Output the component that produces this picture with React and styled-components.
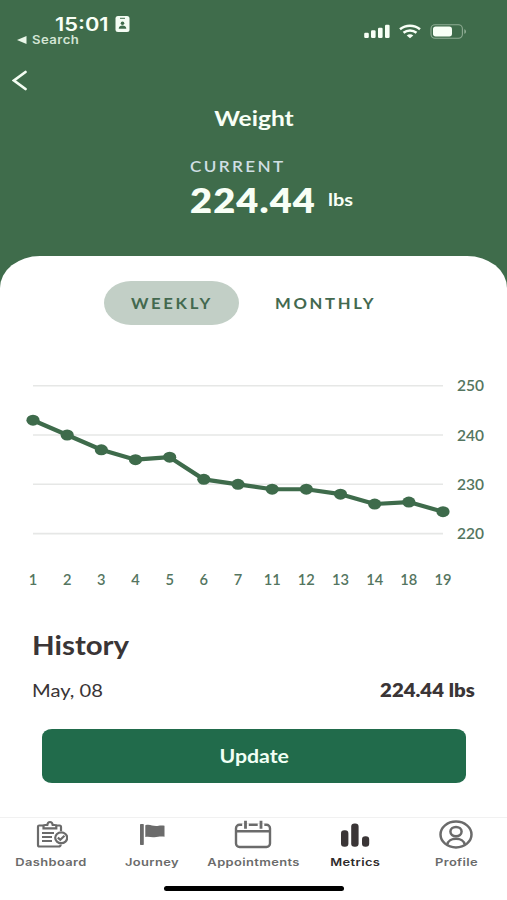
import React from 'react';
import styled, { createGlobalStyle } from 'styled-components';

const weights = [
  { day: '1', value: 243 },
  { day: '2', value: 240 },
  { day: '3', value: 237 },
  { day: '4', value: 235 },
  { day: '5', value: 235.5 },
  { day: '6', value: 231 },
  { day: '7', value: 230 },
  { day: '11', value: 229 },
  { day: '12', value: 229 },
  { day: '13', value: 228 },
  { day: '14', value: 226 },
  { day: '18', value: 226.4 },
  { day: '19', value: 224.44 },
];

const ticks = [250, 240, 230, 220];

const StatusBar = () => (
  <Status>
    <Clock>
      <Time>
        <TimeText>15:01</TimeText>
        <svg width="15" height="16" viewBox="0 0 15 16">
          <rect x="0.5" y="0" width="14" height="16" rx="2.5" fill="#f4fcf3" />
          <path d="M5 2.3h5" stroke="#3f6c4b" strokeWidth="1" />
          <circle cx="7.5" cy="7.3" r="1.8" fill="#3f6c4b" />
          <path d="M3.7 12.8c0-4.4 7.6-4.4 7.6 0z" fill="#3f6c4b" />
        </svg>
      </Time>
      <BackToApp>
        <svg width="10" height="8" viewBox="0 0 10 8">
          <path d="M0 4L9.5 0v8z" fill="#eaf7e9" />
        </svg>
        <SearchText>Search</SearchText>
      </BackToApp>
    </Clock>
    <svg width="104" height="16" viewBox="0 0 104 16">
      <g fill="#f8fff6">
        <rect x="0.2" y="8.7" width="4.6" height="5.2" rx="1.2" />
        <rect x="7" y="6.3" width="4.6" height="7.6" rx="1.2" />
        <rect x="14" y="3.7" width="4.6" height="10.2" rx="1.2" />
        <rect x="21" y="0.8" width="4.6" height="13.1" rx="1.2" />
        <path d="M46 14.2l-3.3-2.8c1.9-1.6 4.700-1.600 6.600 0z" />
      </g>
      <g fill="none" stroke="#f8fff6" strokeWidth="2.5">
        <path d="M36 5.200c5.700-4.700 14.300-4.700 20 0" />
        <path d="M39.500 8.700c3.800-3.100 9.200-3.100 13 0" />
      </g>
      <rect x="67" y="0.700" width="31.400" height="13.600" rx="4" fill="none" stroke="#8fac94" strokeWidth="1.100" />
      <rect x="69" y="2.600" width="19" height="9.800" rx="2.700" fill="#f8fff6" />
      <path d="M100.300 5.200c2.300.6 2.300 4 0 4.600z" fill="#8fac94" />
    </svg>
  </Status>
);

// Plot area: 33..443 horizontally, 10 lbs every 49.3px
const WeightChart = () => {
  const x = i => 33 + i * (410 / (weights.length - 1));
  const y = v => 15.7 + (250 - v) * 4.93;

  return (
    <Chart width="507" height="230" viewBox="0 0 507 230">
      {ticks.map(t => (
        <g key={t}>
          <line x1="33" x2="443" y1={y(t)} y2={y(t)} stroke="#e6e7e6" strokeWidth="1.6" />
          <AxisLabel x="457" y={y(t) + 5.6} textLength="27" lengthAdjust="spacingAndGlyphs">{t}</AxisLabel>
        </g>
      ))}
      <polyline
        points={weights.map((w, i) => `${x(i)},${y(w.value)}`).join(' ')}
        fill="none"
        stroke="#3e6b4b"
        strokeWidth="4.2"
        strokeLinejoin="round"
      />
      {weights.map((w, i) => (
        <g key={w.day}>
          <ellipse cx={x(i)} cy={y(w.value)} rx="6.6" ry="5.5" fill="#3e6b4b" />
          <AxisLabel
            x={x(i)}
            y="215.4"
            textAnchor="middle"
            textLength={w.day.length > 1 ? 17 : 8.5}
            lengthAdjust="spacingAndGlyphs"
          >
            {w.day}
          </AxisLabel>
        </g>
      ))}
    </Chart>
  );
};

const DashboardIcon = () => (
  <svg width="34" height="30" viewBox="0 0 34 30" fill="none" stroke="#6b6b6b" strokeWidth="2.2">
    <path d="M9.500 5.500H5.200Q4 5.500 4 6.700V25Q4 26.500 5.500 26.500H24.500Q26.700 26.500 26.700 24.500M22 5.500h3.700q1.300 0 1.300 1.500V11" />
    <path d="M9.500 8.300V6.200Q9.500 5 11 5h2.300q.4-3 2.700-3t2.700 3H21q1.300 0 1.300 1.200v2.100z" />
    <path d="M8 13h12M8 17h10M8 21h10" strokeWidth="1.900" />
    <ellipse cx="27.200" cy="17.800" rx="6" ry="5.400" fill="#fff" />
    <path d="M23.800 17.700l2.500 2 4.200-3.900" />
  </svg>
);

const JourneyIcon = () => (
  <svg width="34" height="30" viewBox="0 0 34 30" fill="#6b6b6b">
    <rect x="5" y="4" width="3.800" height="21" rx="0.700" />
    <path d="M10.300 5.200c5-1.500 7 1.300 12 .8 3-.3 4.500-.6 7.200-.2v11c-5-.8-7 .8-11.500.4-3-.3-5-.8-7.700-.2z" />
  </svg>
);

const AppointmentsIcon = () => (
  <svg width="38" height="30" viewBox="0 0 38 30" fill="none" stroke="#6b6b6b" strokeWidth="2.400">
    <rect x="2" y="4.800" width="34" height="22.200" rx="3.500" />
    <path d="M2 11.200h34" />
    <path d="M8.200 4.800h6.600M23.700 4.800h6.600" stroke="#fff" strokeWidth="3.200" />
    <path d="M11.500 0.800v8M27 0.800v8" strokeWidth="2.800" />
  </svg>
);

const MetricsIcon = () => (
  <svg width="34" height="30" viewBox="0 0 34 30" fill="#3a3536">
    <rect x="3" y="10.200" width="7.400" height="16.600" rx="3.300" />
    <rect x="13.200" y="3.500" width="7.400" height="23.300" rx="3.300" />
    <rect x="24" y="16.200" width="7.200" height="10.600" rx="3.300" />
  </svg>
);

const ProfileIcon = () => (
  <svg width="36" height="30" viewBox="0 0 36 30" fill="none" stroke="#6b6b6b" strokeWidth="2.500">
    <ellipse cx="18" cy="14.500" rx="15.500" ry="12.900" />
    <ellipse cx="18" cy="11.600" rx="5.600" ry="4.700" />
    <path d="M9.300 24.700c.8-8 16.600-8 17.400 0" />
  </svg>
);

const tabs = [
  { label: 'Dashboard', Icon: DashboardIcon, stretch: 1.23 },
  { label: 'Journey', Icon: JourneyIcon, stretch: 1.23 },
  { label: 'Appointments', Icon: AppointmentsIcon, stretch: 1.23 },
  { label: 'Metrics', Icon: MetricsIcon, stretch: 1.23, active: true },
  { label: 'Profile', Icon: ProfileIcon, stretch: 1.23 },
];

const App = () => (
  <Screen>
    <GlobalStyle />
    <Header>
      <StatusBar />
      <BackButton aria-label="Back">
        <svg width="16" height="22" viewBox="0 0 16 22">
          <path d="M13.500 2L2 10.500l11.500 8.500" fill="none" stroke="#f4fdf3" strokeWidth="2.700" strokeLinecap="round" />
        </svg>
      </BackButton>
      <Title>Weight</Title>
      <Current>
        <CurrentLabel>CURRENT</CurrentLabel>
        <Reading>
          <Value>224.44</Value>
          <Unit>lbs</Unit>
        </Reading>
      </Current>
    </Header>
    <Panel>
      <Periods>
        <Period $active>
          <PeriodText>WEEKLY</PeriodText>
        </Period>
        <Period>
          <PeriodText>MONTHLY</PeriodText>
        </Period>
      </Periods>
      <WeightChart />
      <History>
        <HistoryTitle>History</HistoryTitle>
        <HistoryRow>
          <EntryDate>May, 08</EntryDate>
          <EntryValue>224.44 lbs</EntryValue>
        </HistoryRow>
      </History>
      <UpdateButton>
        <UpdateText>Update</UpdateText>
      </UpdateButton>
    </Panel>
    <TabBar>
      {tabs.map(({ label, Icon, stretch, active }) => (
        <Tab key={label}>
          <Icon />
          <TabLabel $stretch={stretch} $active={active}>{label}</TabLabel>
        </Tab>
      ))}
    </TabBar>
    <HomeArea>
      <HomeIndicator />
    </HomeArea>
  </Screen>
);

// Styled Components
const GlobalStyle = createGlobalStyle`
  body {
    margin: 0;
    background: #fff;
  }
  * {
    box-sizing: border-box;
  }
  svg {
    display: block;
    flex-shrink: 0;
  }
`;

const Screen = styled.div`
  display: flex;
  flex-direction: column;
  width: 507px;
  height: 900px;
  overflow: hidden;
  background: #3f6c4b;
  font-family: Lato, 'Liberation Sans', sans-serif;
`;

const Stretched = styled.span`
  display: inline-block;
  white-space: nowrap;
  transform: scaleX(${({ $stretch }) => $stretch || 1.2});
  transform-origin: ${({ $origin }) => $origin || 'left'} center;
`;

const Header = styled.header`
  display: flex;
  flex-direction: column;
  height: 256px;
  color: #f8fff6;
`;

const Status = styled.div`
  display: flex;
  justify-content: space-between;
  align-items: flex-start;
  height: 68px;
  padding: 14px 39px 0 17px;

  > svg {
    margin-top: 10px;
  }
`;

const Clock = styled.div`
  font-family: 'Liberation Sans', sans-serif;
`;

const Time = styled.div`
  display: flex;
  align-items: center;
  height: 20px;
  padding-left: 38px;
`;

const TimeText = styled(Stretched).attrs({ $stretch: 1.18 })`
  width: 60px;
  font-family: Inter, 'Liberation Sans', sans-serif;
  font-size: 18.5px;
  font-weight: 600;
  line-height: 20px;
`;

const BackToApp = styled.div`
  display: flex;
  align-items: center;
  gap: 5px;
  height: 12px;
`;

const SearchText = styled(Stretched).attrs({ $stretch: 1.14 })`
  font-family: Inter, 'Liberation Sans', sans-serif;
  font-size: 11.5px;
  font-weight: 600;
  line-height: 12px;
  letter-spacing: 0.4px;
  color: #d3e5d4;
`;

const BackButton = styled.button`
  width: 40px;
  height: 26px;
  padding: 2px 0 2px 12px;
  border: none;
  background: none;
  cursor: pointer;
`;

const Title = styled.h1`
  align-self: center;
  margin: 11px 0 0;
  font-size: 21px;
  font-weight: 700;
  line-height: 26px;
  transform: scaleX(1.17);
`;

const Current = styled.div`
  display: flex;
  flex-direction: column;
  align-items: flex-start;
  padding: 26px 0 0 190px;
`;

const CurrentLabel = styled(Stretched).attrs({ $stretch: 1.14 })`
  font-size: 15px;
  font-weight: 600;
  line-height: 18px;
  letter-spacing: 2.1px;
  color: #d0dfe4;
`;

const Reading = styled.div`
  display: flex;
  align-items: center;
  height: 49px;
`;

const Value = styled(Stretched).attrs({ $stretch: 1.15 })`
  width: 138px;
  font-size: 33px;
  font-weight: 800;
  line-height: 40px;
  letter-spacing: 1px;
`;

const Unit = styled(Stretched).attrs({ $stretch: 1.14 })`
  font-size: 17.5px;
  font-weight: 700;
`;

const Panel = styled.main`
  display: flex;
  flex-direction: column;
  height: 561px;
  padding-top: 25px;
  background: #fff;
  border-radius: 40px 40px 0 0 / 32px 32px 0 0;
`;

const Periods = styled.div`
  display: flex;
  gap: 19px;
  padding-left: 104px;
`;

const Period = styled.button`
  display: flex;
  justify-content: center;
  align-items: center;
  width: 135px;
  height: 44px;
  padding: 0;
  border: none;
  border-radius: 27px / 22px;
  background: ${({ $active }) => ($active ? '#c2cfc6' : 'transparent')};
  color: #43694f;
  font-family: inherit;
  cursor: pointer;
`;

const PeriodText = styled(Stretched).attrs({ $stretch: 1.11, $origin: 'center' })`
  font-size: 15px;
  font-weight: 700;
  letter-spacing: 2.4px;
`;

const Chart = styled.svg`
  margin-top: 45px;
`;

const AxisLabel = styled.text`
  font-family: Lato, 'Liberation Sans', sans-serif;
  font-size: 15.5px;
  font-weight: 600;
  fill: #547560;
`;

const History = styled.section`
  padding: 28px 32px 0;
  color: #3a3536;
`;

const HistoryTitle = styled(Stretched).attrs({ as: 'h2', $stretch: 1.09 })`
  margin: 0;
  font-size: 27px;
  font-weight: 700;
  line-height: 34px;
`;

const HistoryRow = styled.div`
  display: flex;
  justify-content: space-between;
  align-items: center;
  height: 24px;
  margin-top: 16px;
  font-size: 18px;
`;

const EntryDate = styled(Stretched).attrs({ $stretch: 1.12 })``;

const EntryValue = styled(Stretched).attrs({ $stretch: 1.13, $origin: 'right' })`
  font-weight: 800;
`;

const UpdateButton = styled.button`
  height: 54px;
  margin: 27px 41px 0 42px;
  border: none;
  border-radius: 10px / 8px;
  background: #216b4b;
  color: #f0fff4;
  font-family: inherit;
  cursor: pointer;
`;

const UpdateText = styled(Stretched).attrs({ $stretch: 1.15, $origin: 'center' })`
  font-size: 18.5px;
  font-weight: 700;
`;

const TabBar = styled.nav`
  display: grid;
  grid-template-columns: repeat(5, 1fr);
  height: 59px;
  border-top: 1px solid #f1f1f1;
  background: #fff;
`;

const Tab = styled.div`
  display: flex;
  flex-direction: column;
  align-items: center;
  padding-top: 2px;
`;

const TabLabel = styled(Stretched).attrs({ $origin: 'center' })`
  margin-top: 6px;
  font-family: Inter, 'Liberation Sans', sans-serif;
  font-size: 10.5px;
  font-weight: 600;
  line-height: 14px;
  letter-spacing: 0.3px;
  color: ${({ $active }) => ($active ? '#2f2b2c' : '#6b6b6b')};
`;

const HomeArea = styled.div`
  display: flex;
  justify-content: center;
  flex: 1;
  padding-top: 10px;
  background: #fff;
`;

const HomeIndicator = styled.div`
  width: 180px;
  height: 5px;
  border-radius: 3px;
  background: #000;
`;

export default App;
